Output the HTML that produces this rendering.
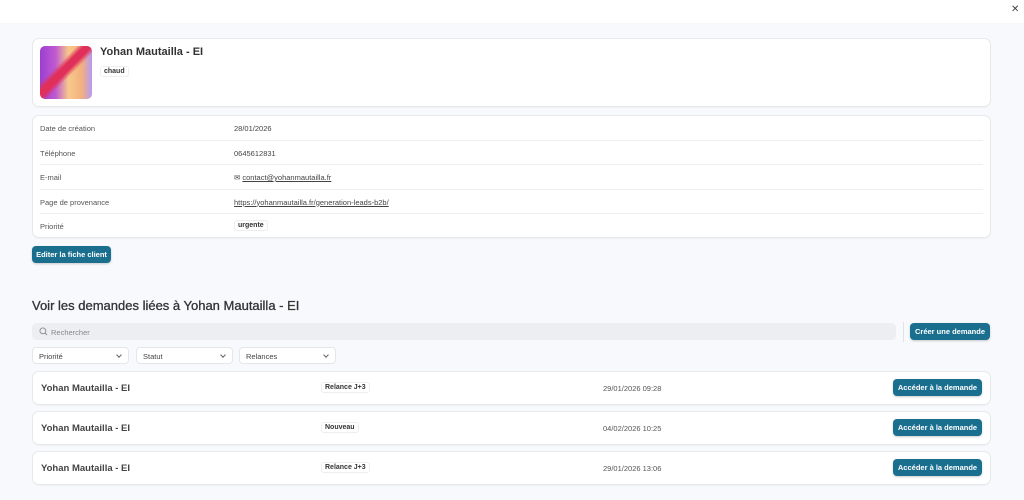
<!DOCTYPE html>
<html><head><meta charset="utf-8"><style>
*{box-sizing:border-box;margin:0;padding:0}
body{width:1024px;height:500px;overflow:hidden;background:#f7f9fc;font-family:"Liberation Sans",sans-serif;color:#333;position:relative}
.top{position:absolute;left:0;top:0;width:1024px;height:23px;background:#fff}
.x{position:absolute;left:1011px;top:4px;font-size:10px;color:#444}
.card{position:absolute;background:#fff;border-radius:6px;box-shadow:0 0 0 1px #e6e8ec,0 1px 2px rgba(0,0,0,.08)}
.avatar{position:absolute;left:7px;top:7px;width:52px;height:53px;border-radius:5px;
background:linear-gradient(135deg,transparent 35%,#e0305a 42%,#e0305a 50%,transparent 57%),linear-gradient(90deg,#9b3fd0 0%,#c05ad0 30%,#f7c98a 55%,#f4b080 80%,#b79af0 100%)}
.name{position:absolute;left:67px;top:7px;font-size:11px;font-weight:bold;color:#333}
.tag{position:absolute;font-size:7px;font-weight:bold;color:#333;background:#fff;border:1px solid #eee;border-radius:3px;padding:1px 3px}
.row{position:absolute;left:7px;width:943px;height:24.5px;border-bottom:1px solid #eceef1;font-size:7.5px;color:#555}
.row span{position:absolute;top:8px}
.row .v{left:194px;color:#444}
.btn{position:absolute;background:#1a6f8f;color:#fff;font-size:7.5px;font-weight:bold;border-radius:4px;text-align:center;box-shadow:0 1px 2px rgba(0,0,0,.2)}
h2{position:absolute;left:32px;top:298px;font-size:13px;font-weight:normal;color:#333;-webkit-text-stroke:0.3px #333}
.search{position:absolute;left:32px;top:323px;width:864px;height:17px;background:#eceef1;border-radius:5px;font-size:7.5px;color:#888;padding:5px 0 0 19px}
.sel{position:absolute;top:347px;width:97px;height:17px;background:#fff;border:1px solid #e4e6ea;border-radius:4px;font-size:7.5px;color:#444;padding:4px 0 0 6px}
.sel:after{content:"";position:absolute;right:7px;top:5px;width:3px;height:3px;border-right:1px solid #666;border-bottom:1px solid #666;transform:rotate(45deg)}
.item .n{position:absolute;left:8px;top:11px;font-size:9.5px;font-weight:bold;color:#444}
.item .d{position:absolute;left:570px;top:12px;font-size:7.5px;color:#555}
</style></head><body>
<div class="top"></div><div class="x">✕</div>

<div class="card" style="left:33px;top:39px;width:957px;height:67px">
<div class="avatar"></div>
<div class="name">Yohan Mautailla - EI</div>
<div class="tag" style="left:67px;top:27px">chaud</div>
</div>

<div class="card" style="left:33px;top:116px;width:957px;height:121px">
<div class="row" style="top:0"><span>Date de création</span><span class="v">28/01/2026</span></div>
<div class="row" style="top:24.5px"><span>Téléphone</span><span class="v">0645612831</span></div>
<div class="row" style="top:49px"><span>E-mail</span><span class="v">✉ <u>contact@yohanmautailla.fr</u></span></div>
<div class="row" style="top:73.5px"><span>Page de provenance</span><span class="v"><u>https://yohanmautailla.fr/generation-leads-b2b/</u></span></div>
<div class="row" style="top:98px;border:none"><span>Priorité</span><span class="tag" style="left:194px;top:6px">urgente</span></div>
</div>

<div class="btn" style="left:32px;top:246px;width:79px;height:17px;line-height:17px">Editer la fiche client</div>

<h2>Voir les demandes liées à Yohan Mautailla - EI</h2>
<div class="search"><svg style="position:absolute;left:7px;top:4px" width="9" height="9" viewBox="0 0 10 10"><circle cx="4.3" cy="4.3" r="3.3" fill="none" stroke="#888" stroke-width="1"/><path d="M6.8 6.8L9 9" stroke="#888"/></svg>Rechercher</div>
<div style="position:absolute;left:903px;top:322px;width:1px;height:20px;background:#e0e2e6"></div>
<div class="btn" style="left:910px;top:323px;width:80px;height:17px;line-height:17px">Créer une demande</div>

<div class="sel" style="left:32px">Priorité</div>
<div class="sel" style="left:136px">Statut</div>
<div class="sel" style="left:239px">Relances</div>

<div class="card item" style="left:33px;top:372px;width:957px;height:32px"><div class="n">Yohan Mautailla - EI</div><div class="tag" style="left:288px;top:10px">Relance J+3</div><div class="d">29/01/2026 09:28</div><div class="btn" style="left:860px;top:7px;width:89px;height:17px;line-height:17px">Accéder à la demande</div></div>
<div class="card item" style="left:33px;top:412px;width:957px;height:32px"><div class="n">Yohan Mautailla - EI</div><div class="tag" style="left:288px;top:10px">Nouveau</div><div class="d">04/02/2026 10:25</div><div class="btn" style="left:860px;top:7px;width:89px;height:17px;line-height:17px">Accéder à la demande</div></div>
<div class="card item" style="left:33px;top:452px;width:957px;height:32px"><div class="n">Yohan Mautailla - EI</div><div class="tag" style="left:288px;top:10px">Relance J+3</div><div class="d">29/01/2026 13:06</div><div class="btn" style="left:860px;top:7px;width:89px;height:17px;line-height:17px">Accéder à la demande</div></div>
</body></html>
